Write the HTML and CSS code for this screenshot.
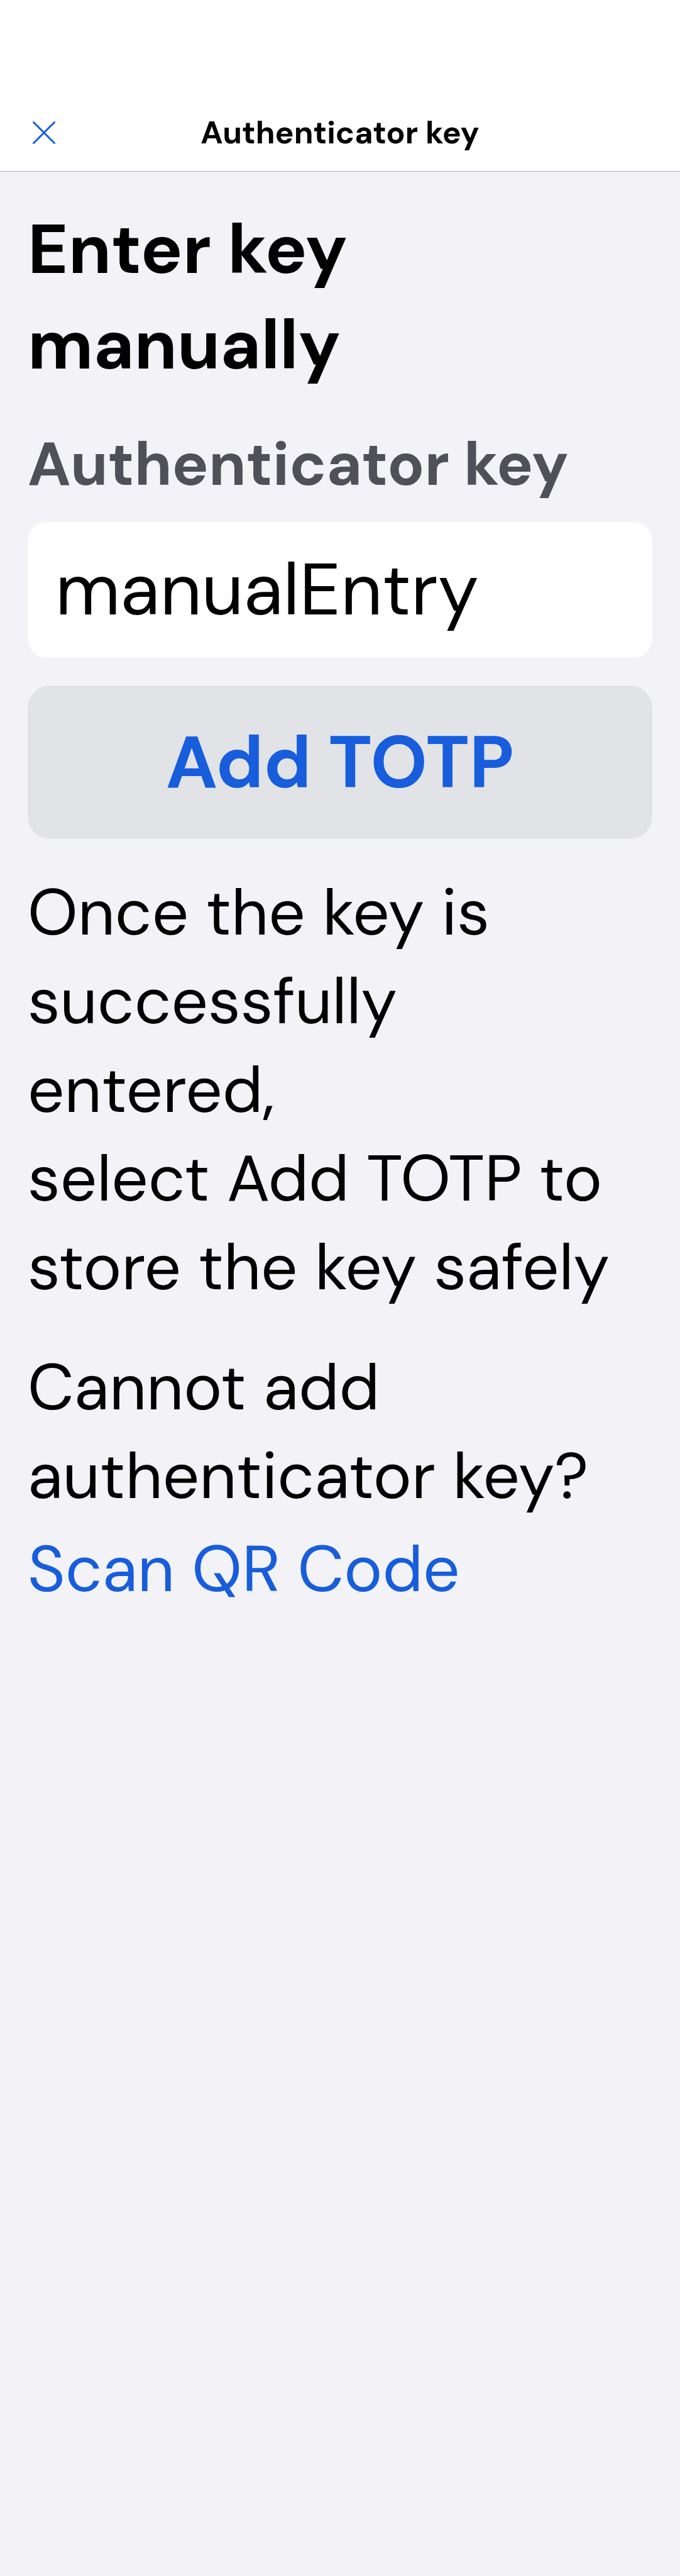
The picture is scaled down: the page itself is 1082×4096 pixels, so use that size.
FILE: index.html
```html
<!DOCTYPE html>
<html lang="en">
<head>
<meta charset="utf-8">
<meta name="viewport" content="width=device-width, initial-scale=1">
<title>Authenticator key</title>
<link rel="stylesheet" href="styles.css">
</head>
<body>
<header class="navbar">
  <button class="close" type="button" aria-label="Close">
    <svg class="close-icon" viewBox="0 0 36 36" aria-hidden="true"><path d="M1.500 1.500 34.500 34.500M34.500 1.500 1.500 34.500"/></svg>
  </button>
  <h2 class="navbar-title">Authenticator key</h2>
</header>
<main class="content">
  <h1 class="heading">Enter key<br>manually</h1>
  <form class="form">
    <label class="label" for="key">Authenticator key</label>
    <input class="field" id="key" type="text" value="manualEntry">
    <button class="submit" type="button">Add TOTP</button>
  </form>
  <p class="text">Once the key is<br>successfully<br>entered,<br>select Add TOTP to<br>store the key safely</p>
  <div class="alternative">
    <p class="text">Cannot add<br>authenticator key?</p>
    <a class="text link" href="#scan">Scan QR Code</a>
  </div>
</main>
</body>
</html>
```
FILE: styles.css
```css
* {
  box-sizing: border-box;
}

body {
  margin: 0;
  min-height: 100vh;
  background: #f2f2f7;
  color: #000;
  font-family: "DM Sans", Inter, sans-serif;
}

h1, h2, p {
  margin: 0;
}

.navbar {
  display: grid;
  grid-template-columns: 64px 1fr 64px;
  align-items: center;
  padding: 150px 38px 0;
  height: 273px;
  background: #fff;
  border-bottom: 1px solid #a9a9ac;
}

.close {
  display: grid;
  place-items: center;
  width: 64px;
  height: 64px;
  padding: 0;
  border: 0;
  background: none;
}

.close-icon {
  width: 36px;
  height: 36px;
  fill: none;
  stroke: #175ddc;
  stroke-width: 3;
  stroke-linecap: round;
}

.navbar-title {
  font-size: 50px;
  font-weight: 700;
  line-height: 64px;
  text-align: center;
}

.content {
  padding: 47px 44px;
}

.heading {
  font-size: 111px;
  font-weight: 700;
  line-height: 152px;
}

.form {
  display: flex;
  flex-direction: column;
  margin: 38px 0 47px;
}

.label {
  margin-bottom: 16px;
  color: #505058;
  font-size: 97px;
  font-weight: 700;
  line-height: 152px;
}

.field {
  width: 100%;
  height: 215px;
  padding: 0 44px;
  border: 0;
  border-radius: 30px;
  background: #fff;
  color: #000;
  font: inherit;
  font-size: 116px;
}

.submit {
  height: 244px;
  margin-top: 45px;
  border: 0;
  border-radius: 36px;
  background: #e1e3e7;
  color: #175ddc;
  font: inherit;
  font-size: 116px;
  font-weight: 700;
}

.text {
  font-size: 103px;
  line-height: 141px;
}

.alternative {
  display: flex;
  flex-direction: column;
  align-items: flex-start;
  gap: 7px;
  margin-top: 50px;
}

.link {
  color: #175ddc;
  text-decoration: none;
}
```
